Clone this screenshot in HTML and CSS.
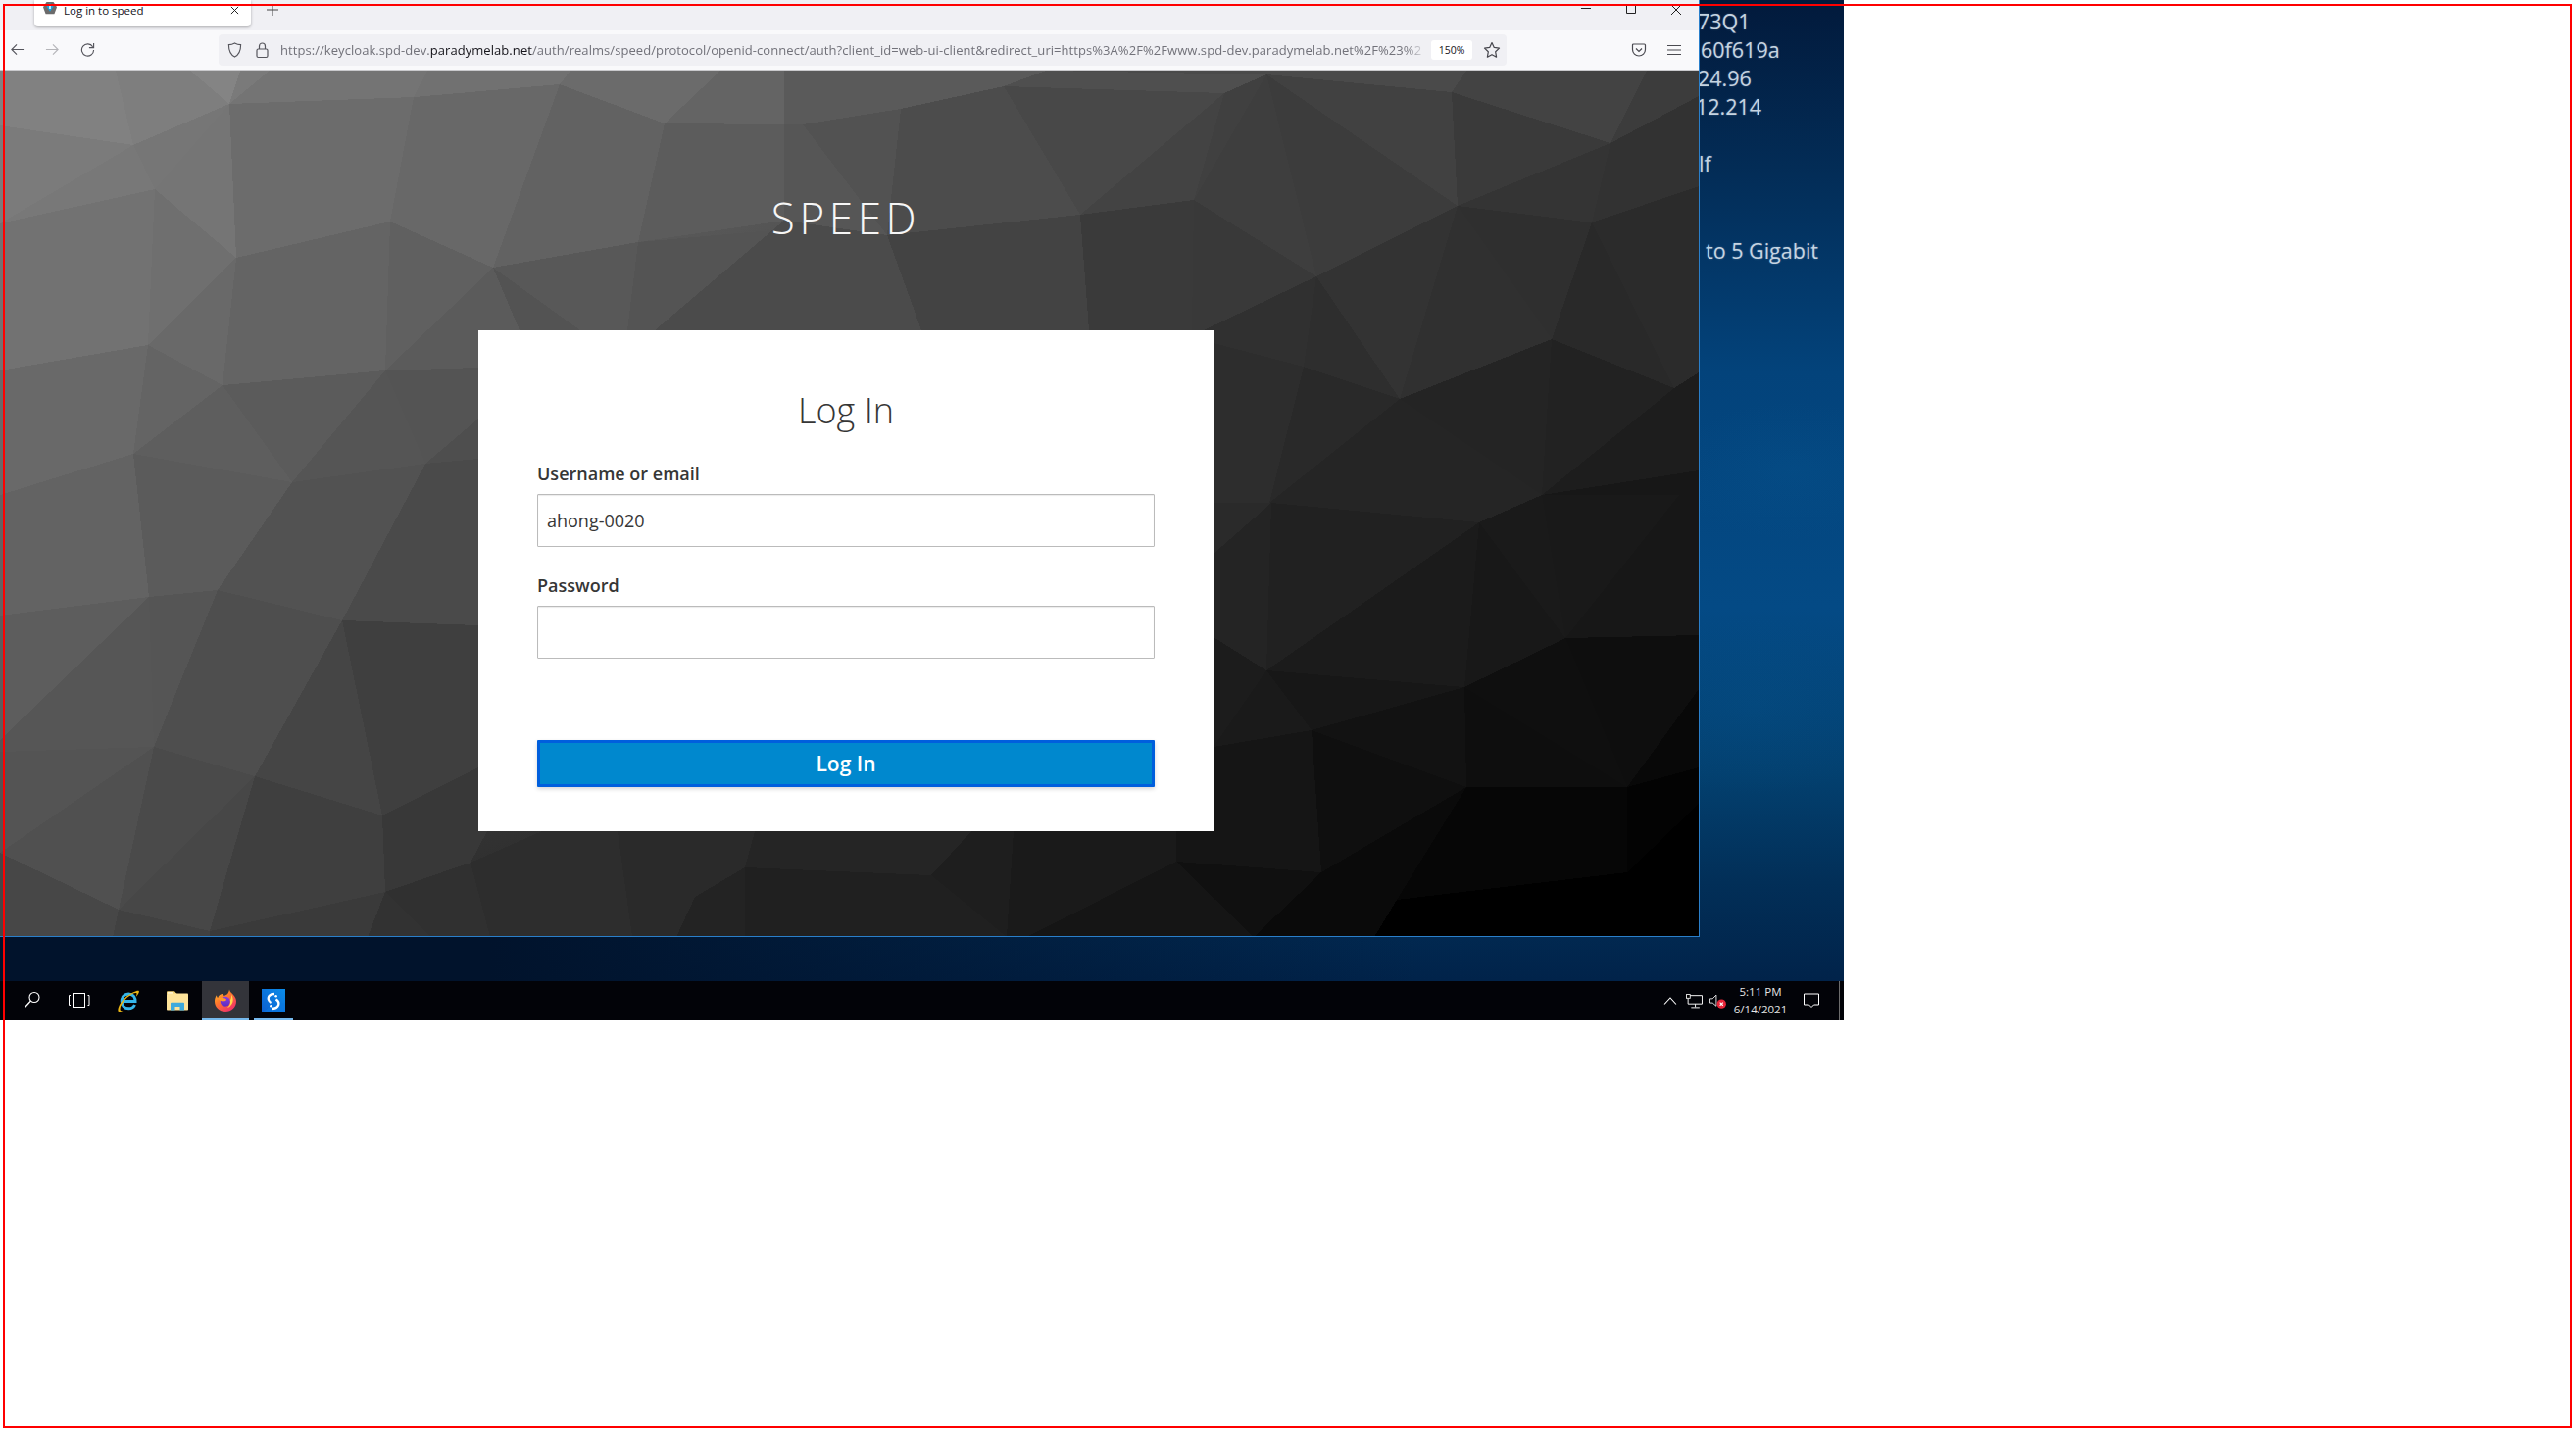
FILE: index.html
```html
<!DOCTYPE html>
<html lang="en">
<head>
<meta charset="utf-8">
<title>Log in to speed</title>
<link rel="stylesheet" href="styles.css">
</head>
<body>
<div class="desktop">
  <div class="wallpaper-text">
    <p class="line-a">73Q1</p><p>60f619a</p><p class="line-a">24.96</p><p class="nudge">12.214</p><p class="gap1">lf</p><p class="gap2">to 5 Gigabit</p>
  </div>

  <div class="window">
    <div class="tabbar">
      <div class="tab">
        <svg class="favicon" viewBox="0 0 16 16"><path d="M4 0h8l4 6-3 8H3L0 6z" fill="#6b6b6b"/><path d="M8 1l4 4-4 6-4-6z" fill="#1aa3e0"/><path d="M7 3h2v5H7z" fill="#d8f2ff"/></svg>
        <span class="tab-title">Log in to speed</span>
        <svg class="tab-close" viewBox="0 0 10 10"><path d="M1 1l8 8M9 1l-8 8" stroke="#222" stroke-width="1.1" fill="none"/></svg>
      </div>
      <svg class="tab-new" viewBox="0 0 12 12"><path d="M6 0v12M0 6h12" stroke="#444" stroke-width="1"/></svg>
      <div class="win-controls">
        <svg viewBox="0 0 10 10"><path d="M0 3.5h10" stroke="#222" stroke-width="1"/></svg>
        <svg viewBox="0 0 10 10"><path d="M.5-4h9V8.500h-9z" stroke="#222" stroke-width="1" fill="none"/></svg>
        <svg viewBox="0 0 10 10"><path d="M0 0l10 10M10 0L0 10" stroke="#222" stroke-width="1" fill="none"/></svg>
      </div>
    </div>

    <div class="toolbar">
      <div class="nav-buttons">
        <svg viewBox="0 0 16 16"><path d="M15 8H2M7.500 2.500L2 8l5.500 5.500" stroke="#55555c" stroke-width="1.200" fill="none"/></svg>
        <svg viewBox="0 0 16 16"><path d="M1 8h13M8.500 2.500L14 8l-5.500 5.500" stroke="#b5b5b9" stroke-width="1.200" fill="none"/></svg>
        <svg viewBox="0 0 16 16"><path d="M13.500 5A6.500 6.500 0 1 0 14.500 8.500" stroke="#55555c" stroke-width="1.200" fill="none"/><path d="M14.500 1v5h-5" stroke="#55555c" stroke-width="1.200" fill="none"/></svg>
      </div>
      <div class="urlbar">
        <svg class="url-icon" viewBox="0 0 16 18"><path d="M8 1.500c2 1.200 4 1.800 6.500 1.800 0 6-1.500 10.500-6.500 13.200C3 13.800 1.500 9.300 1.500 3.300 4 3.300 6 2.700 8 1.500z" stroke="#55555c" stroke-width="1.200" fill="none"/></svg>
        <svg class="url-icon" viewBox="0 0 14 18"><rect x="1.500" y="8" width="11" height="8.500" rx="1.500" stroke="#55555c" stroke-width="1.200" fill="none"/><path d="M4 8V5a3 3 0 0 1 6 0v3" stroke="#55555c" stroke-width="1.200" fill="none"/></svg>
        <div class="url-text">https://keycloak.spd-dev.<b>paradymelab.net</b>/auth/realms/speed/protocol/openid-connect/auth?client_id=web-ui-client&amp;redirect_uri=https%3A%2F%2Fwww.spd-dev.paradymelab.net%2F%23%2</div>
        <span class="zoom-pill">150%</span>
        <svg class="star" viewBox="0 0 18 18"><path d="M9 1.500l2.300 4.900 5.200.7-3.800 3.700.9 5.400L9 13.700l-4.600 2.500.9-5.400L1.500 7.100l5.200-.7z" stroke="#45454c" stroke-width="1.200" fill="none" stroke-linejoin="round"/></svg>
      </div>
      <svg class="pocket" viewBox="0 0 16 16"><path d="M2.500 2h11c.6 0 1 .4 1 1v4.500a6.500 6.500 0 0 1-13 0V3c0-.6.4-1 1-1z" stroke="#4a4a50" stroke-width="1.200" fill="none"/><path d="M5 6.500L8 9.500l3-3" stroke="#4a4a50" stroke-width="1.200" fill="none"/></svg>
      <svg class="menu" viewBox="0 0 14 14"><path d="M0 2.500h14M0 7h14M0 11.500h14" stroke="#4a4a50" stroke-width="1.200"/></svg>
    </div>

    <main class="content">
      <svg class="poly" viewBox="0 72 1733 884" preserveAspectRatio="none" aria-hidden="true">
        <defs>
          <linearGradient id="polybase" x1="0" y1="0" x2="1" y2="1">
            <stop offset="0" stop-color="#808080"/><stop offset=".5" stop-color="#3c3c3c"/><stop offset="1" stop-color="#000"/>
          </linearGradient>
        </defs>
        <rect x="0" y="72" width="1733" height="884" fill="url(#polybase)"/>
        <polygon fill="#818181" points="0,72 118,72 136,148 0,128"/>
        <polygon fill="#7b7b7b" points="0,128 136,148 0,228"/>
        <polygon fill="#7e7e7e" points="118,72 194,72 234,106 136,148"/>
        <polygon fill="#848484" points="194,72 245,72 234,106"/>
        <polygon fill="#7a7a7a" points="245,72 275,72 234,106"/>
        <polygon fill="#747474" points="275,72 436,72 422,99 234,106"/>
        <polygon fill="#717171" points="436,72 582,72 571,86 422,99"/>
        <polygon fill="#6b6b6b" points="582,72 735,72 678,126 571,86"/>
        <polygon fill="#646464" points="735,72 800,72 800,127 678,126"/>
        <polygon fill="#767676" points="136,148 234,106 158,193"/>
        <polygon fill="#757575" points="234,106 241,263 158,193"/>
        <polygon fill="#787878" points="0,228 136,148 158,193"/>
        <polygon fill="#727272" points="0,228 158,193 151,352 0,378"/>
        <polygon fill="#6f6f6f" points="158,193 241,263 151,352"/>
        <polygon fill="#6c6c6c" points="234,106 422,99 398,226 241,263"/>
        <polygon fill="#686868" points="422,99 571,86 503,273 398,226"/>
        <polygon fill="#626262" points="571,86 678,126 651,247 503,273"/>
        <polygon fill="#5c5c5c" points="678,126 800,127 800,225 651,247"/>
        <polygon fill="#646464" points="241,263 398,226 393,378 227,393"/>
        <polygon fill="#696969" points="151,352 241,263 227,393"/>
        <polygon fill="#606060" points="398,226 503,273 393,378"/>
        <polygon fill="#585858" points="503,273 651,247 640,337 592,337"/>
        <polygon fill="#535353" points="503,273 592,337 530,337"/>
        <polygon fill="#5b5b5b" points="503,273 530,337 488,337 488,375 393,378"/>
        <polygon fill="#545454" points="651,247 788,235 668,337 640,337"/>
        <polygon fill="#696969" points="0,378 151,352 136,463 0,505"/>
        <polygon fill="#646464" points="151,352 227,393 136,463"/>
        <polygon fill="#5e5e5e" points="136,463 227,393 298,492"/>
        <polygon fill="#5b5b5b" points="227,393 393,378 298,492"/>
        <polygon fill="#555555" points="393,378 434,473 298,492"/>
        <polygon fill="#545454" points="393,378 488,375 488,427 434,473"/>
        <polygon fill="#4e4e4e" points="434,473 488,427 488,468"/>
        <polygon fill="#636363" points="0,505 136,463 152,609 0,628"/>
        <polygon fill="#5b5b5b" points="136,463 298,492 222,602 152,609"/>
        <polygon fill="#525252" points="298,492 434,473 349,633 222,602"/>
        <polygon fill="#4a4a4a" points="434,473 488,468 488,638 349,633"/>
        <polygon fill="#5d5d5d" points="0,628 152,609 0,755"/>
        <polygon fill="#555555" points="152,609 222,602 157,762"/>
        <polygon fill="#565656" points="152,609 157,762 0,767 0,755"/>
        <polygon fill="#4e4e4e" points="222,602 349,633 260,792 157,762"/>
        <polygon fill="#3f3f3f" points="349,633 488,638 488,783 390,832"/>
        <polygon fill="#454545" points="349,633 390,832 260,792"/>
        <polygon fill="#545454" points="0,767 157,762 0,870"/>
        <polygon fill="#4a4a4a" points="157,762 260,792 121,928"/>
        <polygon fill="#505050" points="157,762 121,928 0,870"/>
        <polygon fill="#474747" points="260,792 214,950 121,928"/>
        <polygon fill="#3f3f3f" points="260,792 390,832 393,910 214,950"/>
        <polygon fill="#474747" points="0,870 121,928 115,956 0,956"/>
        <polygon fill="#414141" points="121,928 214,950 214,956 115,956"/>
        <polygon fill="#3a3a3a" points="214,956 214,950 393,910 375,956"/>
        <polygon fill="#323232" points="393,910 439,956 375,956"/>
        <polygon fill="#303030" points="393,910 480,880 500,956 439,956"/>
        <polygon fill="#383838" points="390,832 488,783 488,848 497,848 480,880 393,910"/>
        <polygon fill="#2d2d2d" points="480,880 553,848 630,848 645,956 500,956"/>
        <polygon fill="#2a2a2a" points="630,848 770,848 760,885 709,915 690,956 645,956"/>
        <polygon fill="#232323" points="760,885 709,915 690,956 760,956"/>
        <polygon fill="#202020" points="760,885 950,893 1027,956 760,956"/>
        <polygon fill="#252525" points="770,848 991,848 950,893 760,885"/>
        <polygon fill="#1e1e1e" points="991,848 1034,848 1027,956 950,893"/>
        <polygon fill="#1a1a1a" points="1034,848 1200,848 1200,879 1047,956 1027,956"/>
        <polygon fill="#151515" points="1047,956 1200,879 1279,956"/>
        <polygon fill="#5a5a5a" points="800,72 1067,72 1024,88 919,111 819,127 800,127"/>
        <polygon fill="#4f4f4f" points="1067,72 1292,76 1249,95 1024,88"/>
        <polygon fill="#565656" points="800,127 819,127 905,240 800,225"/>
        <polygon fill="#525252" points="819,127 919,111 905,240"/>
        <polygon fill="#4c4c4c" points="919,111 1024,88 1102,219 905,240"/>
        <polygon fill="#4b4b4b" points="800,225 905,240 940,337 668,337 788,235"/>
        <polygon fill="#434343" points="905,240 1102,219 1111,337 940,337"/>
        <polygon fill="#484848" points="1024,88 1249,95 1102,219"/>
        <polygon fill="#434343" points="1249,95 1218,204 1102,219"/>
        <polygon fill="#404040" points="1249,95 1292,76 1218,204"/>
        <polygon fill="#3e3e3e" points="1292,76 1343,282 1218,204"/>
        <polygon fill="#414141" points="1292,76 1481,94 1487,210"/>
        <polygon fill="#3c3c3c" points="1292,76 1487,210 1343,282"/>
        <polygon fill="#4a4a4a" points="1067,72 1496,72 1481,94 1292,76"/>
        <polygon fill="#434343" points="1496,72 1680,72 1643,146 1481,94"/>
        <polygon fill="#3c3c3c" points="1680,72 1733,72 1733,98 1643,146"/>
        <polygon fill="#3a3a3a" points="1481,94 1643,146 1487,210"/>
        <polygon fill="#343434" points="1643,146 1624,227 1487,210"/>
        <polygon fill="#323232" points="1643,146 1733,98 1733,190 1624,227"/>
        <polygon fill="#2b2b2b" points="1624,227 1733,190 1733,380 1708,396"/>
        <polygon fill="#2f2f2f" points="1487,210 1624,227 1583,346"/>
        <polygon fill="#292929" points="1624,227 1708,396 1583,346"/>
        <polygon fill="#303030" points="1487,210 1583,346 1428,407"/>
        <polygon fill="#333333" points="1487,210 1428,407 1343,282"/>
        <polygon fill="#2e2e2e" points="1343,282 1428,407 1330,374"/>
        <polygon fill="#303030" points="1343,282 1330,374 1238,350 1238,337 1228,337"/>
        <polygon fill="#393939" points="1218,204 1343,282 1228,337 1216,337"/>
        <polygon fill="#3a3a3a" points="1102,219 1218,204 1216,337 1111,337"/>
        <polygon fill="#2d2d2d" points="1238,350 1330,374 1295,513 1238,513"/>
        <polygon fill="#292929" points="1330,374 1428,407 1295,513"/>
        <polygon fill="#242424" points="1428,407 1583,346 1573,505"/>
        <polygon fill="#222222" points="1583,346 1708,396 1573,505"/>
        <polygon fill="#252525" points="1428,407 1573,505 1295,513"/>
        <polygon fill="#1d1d1d" points="1708,396 1733,380 1733,480 1573,505"/>
        <polygon fill="#2a2a2a" points="1238,513 1297,513 1238,565"/>
        <polygon fill="#242424" points="1238,565 1297,513 1292,684 1238,650"/>
        <polygon fill="#252525" points="1295,513 1573,505 1509,533"/>
        <polygon fill="#212121" points="1297,513 1509,533 1292,684"/>
        <polygon fill="#1b1b1b" points="1509,533 1494,701 1292,684"/>
        <polygon fill="#181818" points="1509,533 1597,651 1494,701"/>
        <polygon fill="#1a1a1a" points="1509,533 1573,505 1597,651"/>
        <polygon fill="#191919" points="1573,505 1713,505 1597,651"/>
        <polygon fill="#171717" points="1713,505 1573,505 1733,480 1733,648 1597,651"/>
        <polygon fill="#0e0e0e" points="1597,651 1733,648 1733,703 1660,803"/>
        <polygon fill="#080808" points="1733,703 1733,783 1660,803"/>
        <polygon fill="#0f0f0f" points="1597,651 1660,803 1494,701"/>
        <polygon fill="#0e0e0e" points="1494,701 1660,803 1496,803"/>
        <polygon fill="#171717" points="1292,684 1494,701 1338,745"/>
        <polygon fill="#121212" points="1494,701 1496,803 1338,745"/>
        <polygon fill="#1c1c1c" points="1238,650 1292,684 1238,762"/>
        <polygon fill="#1a1a1a" points="1292,684 1338,745 1238,762"/>
        <polygon fill="#151515" points="1238,762 1338,745 1348,890 1200,879 1200,848 1238,848"/>
        <polygon fill="#0f0f0f" points="1338,745 1496,803 1348,890"/>
        <polygon fill="#060606" points="1496,803 1660,803 1660,890 1425,918"/>
        <polygon fill="#0a0a0a" points="1348,890 1496,803 1425,918"/>
        <polygon fill="#030303" points="1660,803 1733,783 1733,820 1660,890"/>
        <polygon fill="#000000" points="1733,820 1733,956 1650,956 1660,890"/>
        <polygon fill="#000000" points="1425,918 1660,890 1650,956 1402,956"/>
        <polygon fill="#0a0a0a" points="1348,890 1425,918 1402,956 1279,956"/>
        <polygon fill="#101010" points="1200,879 1348,890 1279,956"/>
      </svg>
      <div class="brand">SPEED</div>
      <form class="card">
        <h1 class="card-title">Log In</h1>
        <label class="field-label" for="user">Username or email</label>
        <input class="field" id="user" type="text" value="ahong-0020">
        <label class="field-label second" for="pass">Password</label>
        <input class="field" id="pass" type="password">
        <button class="submit" type="button">Log In</button>
      </form>
    </main>
  </div>

  <footer class="taskbar">
    <div class="cell search">
      <svg class="ico-18" viewBox="0 0 18 18"><circle cx="11" cy="6.500" r="5" stroke="#fff" stroke-width="1.100" fill="none"/><path d="M7.500 10L1.500 16.500" stroke="#fff" stroke-width="1.300"/></svg>
    </div>
    <div class="cell">
      <svg class="ico-taskview" viewBox="0 0 22 15"><rect x="4.500" y=".5" width="12" height="14" stroke="#fff" fill="none"/><path d="M2 2.500H.5v10H2M19.500 2.500H21v10h-1.500" stroke="#fff" fill="none"/></svg>
    </div>
    <div class="cell shifted">
      <svg class="ico-24" viewBox="0 0 24 24"><path d="M6 12.500h13c0-4.500-2.800-7.500-6.800-7.500-4.200 0-7 3.200-7 7.500 0 4.300 2.800 7.300 7 7.300 3 0 5.200-1.400 6.300-3.800" stroke="#35b6ea" stroke-width="3" fill="none"/><path d="M1.500 22.500C.5 19 5 11 11.500 6.500 16 3.500 22 .5 22.800 2.200c.5 1-1 3.500-3 5.500.5-1.500 1-3 .6-3.500C19 3 13 6 8.500 11 4.500 15.500 2.500 20 4 22c.6.500 1.600.6 3 .2-2 1.300-4.800 1.700-5.500.3z" fill="#eab514"/></svg>
    </div>
    <div class="cell shifted">
      <svg class="ico-24" viewBox="0 0 24 21"><path d="M1 3.500V1.500C1 1 1.300.8 2 .8h7l2.500 2.700H1z" fill="#f3d373"/><rect x="1" y="3" width="22" height="17" rx=".8" fill="#fde39a"/><rect x="2" y="1.600" width="5" height="1.600" fill="#fff6d8"/><path d="M5 20v-7c0-.5.300-.8.800-.8h12.400c.5 0 .8.300.8.800v7h-4.500v-3.500h-5V20z" fill="#3eaadc"/></svg>
    </div>
    <div class="cell active">
      <svg class="ico-24" viewBox="0 0 24 24">
        <defs>
          <linearGradient id="ffa" x1="0" y1="0" x2=".7" y2="1"><stop offset="0" stop-color="#ffcb2f"/><stop offset=".45" stop-color="#ff7a2b"/><stop offset="1" stop-color="#f0306a"/></linearGradient>
          <linearGradient id="ffb" x1="0" y1="0" x2="0" y2="1"><stop offset="0" stop-color="#8a3fe0"/><stop offset="1" stop-color="#5b2bc0"/></linearGradient>
        </defs>
        <path d="M16 .5c.4 2.300 2 3.300 3.600 5 2.300 2.400 3.400 4.700 3.400 7 0 6-4.900 10.500-11 10.500S1 18.500 1 12.500c0-2.400.7-4.500 2-6.300 0 1.200.4 2.300 1.200 2.800C5 6.500 7 5 9.500 4.700c-.3 1-.5 1.700 0 2.300 2-.3 5.800-1 6.500-6.500z" fill="url(#ffa)"/>
        <circle cx="11.800" cy="12.800" r="5" fill="url(#ffb)"/>
        <path d="M4.500 9.500c2.500-1.500 6.500-.8 8 .6 1.500 1.400-1 2.600-3.500 2.300C7 12.100 5.500 11 4.500 9.500z" fill="#ff9a2c"/>
        <path d="M18 5.500c2 3 2.300 7 .3 10-.9 1.500-2.500 3-4.300 3.500 2.500-2 3.500-5 2.800-7.500 1-1.500 1.500-4 1.200-6z" fill="#ffd84a"/>
      </svg>
    </div>
    <div class="cell running">
      <svg class="ico-tile" viewBox="0 0 24 24">
        <defs><linearGradient id="tile" x1="0" y1="1" x2="1" y2="0"><stop offset="0" stop-color="#0d5fd0"/><stop offset="1" stop-color="#0a8ce8"/></linearGradient></defs>
        <rect width="24" height="24" fill="url(#tile)"/>
        <path d="M0 24l10-7 14-3v10z" fill="#0a78e0" opacity=".6"/>
        <path d="M13 5C8 5 6 8 7 11c.5 1.500 1.500 2.500 2.500 3M14.500 10.500c2.500 1.500 3.500 3.500 2.500 6-1 2.500-4 3.500-7 3.500" stroke="#fff" stroke-width="2.300" fill="none"/>
        <circle cx="14.600" cy="7.300" r="1.300" fill="#fff"/><circle cx="9.400" cy="17.300" r="1.300" fill="#fff"/>
      </svg>
    </div>
    <div class="tray">
      <svg class="tray-chevron" viewBox="0 0 14 8"><path d="M1 7.500L7 1l6 6.500" stroke="#fff" stroke-width="1.100" fill="none"/></svg>
      <svg class="tray-net" viewBox="0 0 16 14"><path d="M3 1.500h12.500v8H2V4" stroke="#fff" stroke-width=".9" fill="none"/><path d="M9 9.500v3M5 13h8" stroke="#fff" stroke-width=".9"/><rect x=".5" y=".5" width="3.500" height="3.500" fill="#000" stroke="#fff" stroke-width=".8"/></svg>
      <svg class="tray-sound" viewBox="0 0 16 14"><path d="M.5 4.500h2.500L6.500 1v10.500L3 8.500H.5z" stroke="#fff" stroke-width=".8" fill="none"/><circle cx="11.500" cy="9.500" r="4.400" fill="#e8263a"/><path d="M10 8l3 3M13 8l-3 3" stroke="#fff" stroke-width="1"/></svg>
      <div class="clock"><span>5:11 PM</span><span>6/14/2021</span></div>
      <svg class="tray-note" viewBox="0 0 16 15"><path d="M.5.5h15v11h-5l-2.500 2.500L5.500 11.500h-5z" stroke="#fff" stroke-width="1" fill="none"/></svg>
      <span class="show-desktop"></span>
    </div>
  </footer>
</div>
<div class="frame"></div>
</body>
</html>
```
FILE: styles.css
```css
* { box-sizing: border-box; }
html, body { margin: 0; padding: 0; }
body {
  position: relative;
  width: 2628px;
  height: 1461px;
  overflow: hidden;
  background: #fff;
  font-family: "Open Sans", "Liberation Sans", sans-serif;
}

/* desktop */
.desktop {
  position: relative;
  width: 1881px;
  height: 1041px;
  overflow: hidden;
  background:
    linear-gradient(90deg, #01132c 0, #01132c 500px, rgba(1, 19, 44, 0) 1450px),
    radial-gradient(ellipse 130px 70px at 1830px 480px, rgba(8, 92, 150, .2), rgba(8, 92, 150, 0) 100%),
    radial-gradient(ellipse 160px 90px at 1790px 720px, rgba(6, 84, 140, .25), rgba(6, 84, 140, 0) 100%),
    linear-gradient(180deg, #021a3c 0, #032c56 170px, #03437b 380px, #044a85 620px, #03406f 790px, #022f58 900px, #01234a 1000px);
}
.wallpaper-text {
  position: absolute;
  left: 1735px;
  top: 7px;
  color: #c6d4e1;
  font-size: 21.500px;
  line-height: 29px;
  white-space: nowrap;
  text-shadow: 0 0 2px rgba(200, 220, 240, .35);
}
.wallpaper-text p { margin: 0; }
.wallpaper-text .line-a { margin-left: -3px; }
.wallpaper-text .nudge { margin-left: -5px; }
.wallpaper-text .gap1 { margin: 29px 0 0 -2px; }
.wallpaper-text .gap2 { margin-top: 60px; margin-left: 5px; }

/* browser window */
.window {
  position: absolute;
  left: 0;
  top: 0;
  width: 1734px;
  height: 956px;
  display: flex;
  flex-direction: column;
  border-right: 1px solid #2a7fca;
  border-bottom: 1px solid #2a7fca;
  background: #222;
}
.tabbar {
  height: 31px;
  flex: none;
  display: flex;
  align-items: flex-start;
  padding-left: 35px;
  background: #f0f0f4;
}
.tab {
  width: 221px;
  height: 27px;
  display: flex;
  align-items: center;
  padding: 0 12px 7px 9px;
  background: #fff;
  border-radius: 0 0 4px 4px;
  box-shadow: 0 1px 3px rgba(0, 0, 0, .3);
}
.favicon { width: 14px; height: 14px; margin-top: -3px; }
.tab-title {
  margin-left: 7px;
  flex: 1;
  font-size: 11.500px;
  color: #15141a;
  white-space: nowrap;
}
.tab-close { width: 9px; height: 9px; }
.tab-new { width: 12px; height: 12px; margin: 4px 0 0 16px; }
.win-controls {
  margin-left: auto;
  display: flex;
  gap: 36px;
  padding: 5px 18px 0 0;
}
.win-controls svg { width: 10px; height: 10px; }

.toolbar {
  height: 41px;
  flex: none;
  display: flex;
  align-items: center;
  padding: 0 18px 1px 10px;
  background: #f9f9fb;
  border-bottom: 1px solid #c9c9cc;
}
.nav-buttons {
  display: flex;
  gap: 21px;
  width: 214px;
}
.nav-buttons svg { width: 15px; height: 15px; }
.urlbar {
  width: 1314px;
  height: 32px;
  display: flex;
  align-items: center;
  padding: 0 7px 0 9px;
  background: #f0f0f4;
  border-radius: 4px;
}
.url-icon { width: 15px; height: 18px; margin-right: 13px; flex: none; }
.url-text {
  width: 1170px;
  margin-left: -2px;
  margin-right: -1px;
  flex: none;
  overflow: hidden;
  white-space: nowrap;
  font-size: 13px;
  letter-spacing: .06px;
  color: #72727a;
  -webkit-mask-image: linear-gradient(to right, #000 98%, transparent);
  mask-image: linear-gradient(to right, #000 98%, transparent);
}
.url-text b { font-weight: 400; color: #15141a; }
.zoom-pill {
  width: 42px;
  height: 20px;
  margin-left: 5px;
  flex: none;
  text-align: center;
  font-size: 10.500px;
  line-height: 20px;
  color: #15141a;
  background: #fff;
  border-radius: 3px;
}
.star { width: 18px; height: 18px; margin-left: 11px; flex: none; }
.pocket { width: 16px; height: 16px; margin-left: 127px; flex: none; }
.menu { width: 14px; height: 14px; margin-left: 21px; flex: none; }

/* page content */
.content {
  position: relative;
  flex: 1;
  display: flex;
  flex-direction: column;
  align-items: center;
  padding: 128px 7px 0 0;
  overflow: hidden;
}
.poly {
  position: absolute;
  left: 0;
  top: 0;
  width: 1733px;
  height: 884px;
  shape-rendering: crispEdges;
}
.brand {
  position: relative;
  height: 44px;
  margin-bottom: 93px;
  font-size: 44px;
  font-weight: 300;
  line-height: 44px;
  letter-spacing: 4.600px;
  color: #f6f6f6;
}
.card {
  position: relative;
  width: 750px;
  padding: 60px 60px 45px;
  display: flex;
  flex-direction: column;
  background: #fff;
}
.card-title {
  margin: 0;
  font-size: 36px;
  font-weight: 300;
  line-height: 44px;
  text-align: center;
  color: #363636;
}
.field-label {
  margin: 30px 0 9px;
  font-size: 18px;
  font-weight: 600;
  line-height: 24px;
  color: #363636;
}
.field-label.second { margin-top: 27px; }
.field {
  width: 630px;
  height: 54px;
  padding: 0 9px;
  font-family: inherit;
  font-size: 18px;
  color: #363636;
  background: #fff;
  border: 1px solid #bbb;
  border-radius: 1px;
  box-shadow: inset 0 1px 1px rgba(3, 3, 3, .08);
  outline: 0;
}
.submit {
  width: 630px;
  height: 48px;
  margin-top: 83px;
  padding: 0;
  font-family: inherit;
  font-size: 21px;
  font-weight: 600;
  color: #fff;
  background: #0088ce;
  border: 3px solid #005fdd;
  border-radius: 1px;
  box-shadow: 0 2px 4px rgba(0, 0, 0, .16);
}

/* taskbar */
.taskbar {
  position: absolute;
  left: 0;
  right: 0;
  bottom: 0;
  height: 40px;
  display: flex;
  padding-left: 9px;
  background: #020308;
}
.cell {
  width: 48px;
  height: 40px;
  flex: none;
  display: flex;
  align-items: center;
  justify-content: center;
}
.cell.shifted { margin-left: 2px; }
.cell.active {
  margin-left: 1px;
  padding-top: 2px;
  background: #33343a;
  border-bottom: 2px solid #76b9ed;
}
.cell.running {
  width: 40px;
  margin-left: 5px;
  padding-top: 2px;
  border-bottom: 2px solid #76b9ed;
}
.ico-18 { width: 18px; height: 18px; margin: 0 0 2px 0; }
.ico-taskview { width: 22px; height: 15px; margin-bottom: 2px; }
.ico-24 { width: 24px; height: 24px; }
.ico-tile { width: 24px; height: 24px; }
.tray {
  margin-left: auto;
  display: flex;
  align-items: center;
  height: 40px;
}
.tray-chevron { width: 14px; height: 8px; margin-right: 9px; }
.tray-net { width: 17px; height: 15px; margin-right: 7px; }
.tray-sound { width: 17px; height: 15px; }
.clock {
  width: 60px;
  margin-left: 5px;
  display: flex;
  flex-direction: column;
  align-items: center;
  font-size: 11.500px;
  line-height: 18px;
  color: #e4e4e4;
  white-space: nowrap;
}
.tray-note { width: 16px; height: 16px; margin-left: 14px; }
.show-desktop {
  width: 1px;
  height: 40px;
  margin: 0 4px 0 20px;
  background: #6c6c6c;
}

/* annotation frame over the whole photo */
.frame {
  position: absolute;
  left: 3px;
  top: 4px;
  width: 2621px;
  height: 1453px;
  border: 2px solid #f00;
  pointer-events: none;
}
```
